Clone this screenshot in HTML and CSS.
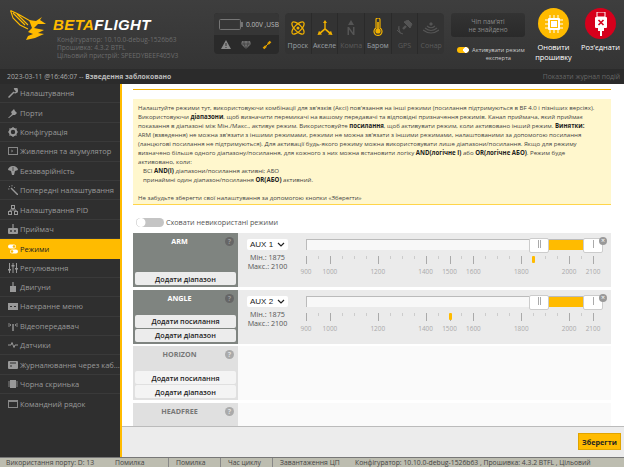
FILE: index.html
```html
<!DOCTYPE html>
<html lang="uk">
<head>
    <meta charset="UTF-8">
    <title>Betaflight</title>
    <link rel="stylesheet" href="styles.css">
</head>
<body>

    <header class="top">
        <div class="brand">
            <svg class="bird" viewBox="0 0 42 32" width="42" height="32">
                <path d="M0.5 0.5 L8 4 L22 12 M0.5 0.5 L3 8 L10 15 L18 19 M3 3 L15 15 M7 4 L18 15" fill="none" stroke="#ffbb00" stroke-width="1.1"/>
                <path d="M19 10 L26 11 L32 7 L30 10 L36 14 L28 14 L24 18 L34 20 L28 23 L34 24 L25 28 L16 30 L18 26 L23 24 L18 22 L22 18 Z" fill="#ffbb00"/>
            </svg>
            <div class="brand-text">
                <div class="logo-word"><span class="logo-beta">BETA</span>FLIGHT</div>
                <div class="versions">
                    Конфігуратор: 10.10.0-debug-1526b63<br>
                    Прошивка: 4.3.2 BTFL<br>
                    Цільовий пристрій: SPEEDYBEEF405V3
                </div>
            </div>
        </div>

        <div class="power">
            <div class="power-top">
                <svg viewBox="0 0 24 11" width="24" height="11">
                    <rect x="0.5" y="0.5" width="21" height="10" rx="1" fill="none" stroke="#777"/>
                    <rect x="22" y="3" width="2" height="5" fill="#777"/>
                </svg>
                <span class="voltage">0.00V ,USB</span>
            </div>
            <div class="power-icons">
                <svg viewBox="0 0 10 9" width="10" height="9"><path d="M5 0 L10 9 H0 Z" fill="#8a8a8a"/><rect x="4.5" y="3" width="1" height="3" fill="#333"/><rect x="4.5" y="7" width="1" height="1" fill="#333"/></svg>
                <svg viewBox="0 0 10 8" width="10" height="8"><path d="M1 0 H9 L10 3 L5 8 L0 3 Z" fill="#6f6f6f"/><path d="M0 3 H10 M3 0 L3 3 L5 8 L7 3 L7 0" stroke="#333" stroke-width="0.6" fill="none"/></svg>
                <svg viewBox="0 0 10 10" width="10" height="10"><path d="M1.5 8.5 L4 6 M6 4 L8.5 1.5" stroke="#e0a000" stroke-width="2.4" fill="none"/><path d="M3 7 L7 3" stroke="#e0a000" stroke-width="1"/></svg>
            </div>
        </div>

        <div class="sensors">
            <div class="sensor on">
                <svg viewBox="0 0 16 16" width="16" height="16"><g fill="none" stroke="#f0b000" stroke-width="1.3"><ellipse cx="8" cy="8" rx="8" ry="3.4" transform="rotate(45 8 8)"/><ellipse cx="8" cy="8" rx="8" ry="3.4" transform="rotate(-45 8 8)"/></g><circle cx="8" cy="8" r="1.5" fill="#f0b000"/></svg>
                <span>Проск</span>
            </div>
            <div class="sensor on">
                <svg viewBox="0 0 16 16" width="16" height="16"><path d="M8 0 L10 3 H8.7 V8.5 L13 12 L14 10.8 L15.5 15 L11 14.6 L12 13.4 L8 10 L4 13.4 L5 14.6 L0.5 15 L2 10.8 L3 12 L7.3 8.5 V3 H6 Z" fill="#f0b000"/></svg>
                <span>Акселе</span>
            </div>
            <div class="sensor">
                <svg viewBox="0 0 14 16" width="14" height="16"><path d="M7 0 L10 5 H4 Z" fill="#555"/><path d="M3.5 15 V7 H5 L9 12.5 V7 H10.5 V15 H9 L5 9.5 V15 Z" fill="#555"/></svg>
                <span>Компа</span>
            </div>
            <div class="sensor on">
                <svg viewBox="0 0 10 18" width="10" height="18"><path d="M3 1.5 a2 1.5 0 0 1 4 0 V10 a4 4 0 1 1 -4 0 Z" fill="none" stroke="#f0b000" stroke-width="1.2"/><rect x="4.2" y="4" width="1.6" height="8" fill="#f0b000"/><circle cx="5" cy="13" r="2.6" fill="#f0b000"/></svg>
                <span>Баром</span>
            </div>
            <div class="sensor">
                <svg viewBox="0 0 16 16" width="16" height="16"><path d="M7 2 L11 0 L15 4 L13 8 Z M3 12 A6 6 0 0 1 2 6 M6 14 A9 9 0 0 1 0 10" stroke="#555" fill="#555" stroke-width="1"/><path d="M9 6 L6 9" stroke="#555" stroke-width="2.4"/></svg>
                <span>GPS</span>
            </div>
            <div class="sensor">
                <svg viewBox="0 0 16 14" width="16" height="14"><g fill="none" stroke="#555" stroke-width="1.1"><path d="M0 8 Q8 14 16 8"/><path d="M2 6 Q8 11 14 6"/><path d="M4 4 Q8 7.5 12 4"/></g><path d="M6 2 L8 0 L10 2 L8 4 Z" fill="#555"/></svg>
                <span>Сонар</span>
            </div>
        </div>

        <div class="flash-box">
            <div class="flash-info">Чіп пам'яті<br>не знайдено</div>
            <div class="expert">
                <span class="mini-toggle"></span>
                <span class="expert-label">Активувати режим<br>експерта</span>
            </div>
        </div>

        <div class="round-btn">
            <div class="circle circle-flash">
                <svg viewBox="0 0 18 18" width="18" height="18">
                    <rect x="3" y="3" width="12" height="12" rx="1" fill="#fff"/>
                    <path d="M5 0 V18 M9 0 V18 M13 0 V18 M0 5 H18 M0 9 H18 M0 13 H18" stroke="#fff" stroke-width="1"/>
                    <rect x="5" y="5" width="8" height="8" fill="#ffbb00"/>
                    <rect x="6" y="6" width="6" height="6" fill="#fff"/>
                </svg>
            </div>
            <span>Оновити<br>прошивку</span>
        </div>
        <div class="round-btn">
            <div class="circle circle-connect">
                <svg viewBox="0 0 14 24" width="14" height="24">
                    <rect x="3" y="0" width="8" height="5" fill="none" stroke="#fff"/>
                    <rect x="1" y="5" width="12" height="11" rx="1" fill="#fff"/>
                    <path d="M4.5 8 L9.5 13 M9.5 8 L4.5 13" stroke="#d6001c" stroke-width="1.6"/>
                    <path d="M7 16 V24" stroke="#fff" stroke-width="2"/>
                    <rect x="4" y="16" width="6" height="3" fill="#fff"/>
                </svg>
            </div>
            <span>Роз'єднати</span>
        </div>
    </header>

    <div class="log-bar">
        <div class="log-text">2023-03-11 @16:46:07 -- <b>Взведення заблоковано</b></div>
        <div class="log-toggle">Показати журнал подій</div>
    </div>

    <div class="main">
        <nav class="sidebar">
            <a class="nav-item"><svg viewBox="0 0 10 10" width="10" height="10"><path d="M0.5 9.5 L6 4 M6 1 L9 0 L7.5 2 L8.5 3 L10 1.5 L9 4 L6.5 5" stroke="#999" stroke-width="1.5" fill="none"/></svg>Налаштування</a>
            <a class="nav-item"><svg viewBox="0 0 10 10" width="10" height="10"><path d="M0 10 L4 6 L3 4 L6 1 L7 3 L9 5 L7 7 L5 7 L1 10 Z" fill="#999"/></svg>Порти</a>
            <a class="nav-item"><svg viewBox="0 0 10 10" width="10" height="10"><circle cx="5" cy="5" r="3.2" fill="none" stroke="#999" stroke-width="2"/><path d="M5 0 V10 M0 5 H10 M1.5 1.5 L8.5 8.5 M8.5 1.5 L1.5 8.5" stroke="#999" stroke-width="1.2" stroke-dasharray="1.6 6.8"/></svg>Конфігурація</a>
            <a class="nav-item"><svg viewBox="0 0 10 8" width="10" height="8"><rect x="0.5" y="0.5" width="9" height="7" fill="none" stroke="#888"/><path d="M3 3 L5 4 L3 5" stroke="#888" fill="none" stroke-width="0.7"/></svg>Живлення та акумулятор</a>
            <a class="nav-item"><svg viewBox="0 0 10 10" width="10" height="10"><path d="M0 4 A5 4 0 0 1 10 4 L7 5 L6 9 H4 L3 5 Z" fill="#999"/><path d="M5 1 V5" stroke="#2f2f2f" stroke-width="0.7"/></svg>Безаварійність</a>
            <a class="nav-item"><svg viewBox="0 0 10 10" width="10" height="10"><path d="M3 3 L10 10" stroke="#999" stroke-width="1.4"/><path d="M1 1 L2 2 M4 0 V1.5 M0 4 H1.5 M7 2 L6 3" stroke="#999" stroke-width="0.8"/></svg>Попередні налаштування</a>
            <a class="nav-item"><svg viewBox="0 0 10 10" width="10" height="10"><g fill="none" stroke="#999"><rect x="3.5" y="0.5" width="3" height="3"/><rect x="0.5" y="6.5" width="3" height="3"/><rect x="6.5" y="6.5" width="3" height="3"/><path d="M5 3.5 V5 H2 V6.5 M5 5 H8 V6.5"/></g></svg>Налаштування PID</a>
            <a class="nav-item"><svg viewBox="0 0 10 10" width="10" height="10"><rect x="0" y="4" width="10" height="6" rx="1" fill="#999"/><rect x="4.4" y="0" width="1.2" height="5" fill="#999"/><circle cx="3" cy="7" r="0.9" fill="#2f2f2f"/><circle cx="7" cy="7" r="0.9" fill="#2f2f2f"/></svg>Приймач</a>
            <a class="nav-item active"><svg viewBox="0 0 10 10" width="10" height="10"><rect x="0" y="0.5" width="8" height="4" rx="2" fill="#fff"/><rect x="2" y="5.5" width="8" height="4" rx="2" fill="#fff"/><circle cx="6" cy="2.5" r="1.3" fill="#ffbb00"/><circle cx="4" cy="7.5" r="1.3" fill="#ffbb00"/></svg>Режими</a>
            <a class="nav-item"><svg viewBox="0 0 10 10" width="10" height="10"><path d="M1.5 0 V10 M5 0 V10 M8.5 0 V10" stroke="#999"/><rect x="0" y="6" width="3" height="1.5" fill="#999"/><rect x="3.5" y="2" width="3" height="1.5" fill="#999"/><rect x="7" y="5" width="3" height="1.5" fill="#999"/></svg>Регулювання</a>
            <a class="nav-item"><svg viewBox="0 0 10 10" width="10" height="10"><rect x="4.4" y="0" width="1.2" height="4" fill="#999"/><rect x="2" y="4" width="6" height="6" fill="#999"/></svg>Двигуни</a>
            <a class="nav-item"><svg viewBox="0 0 10 7" width="10" height="7"><rect width="10" height="7" fill="#999"/><path d="M2 3.5 H4 M6 3.5 H8" stroke="#2f2f2f"/></svg>Наекранне меню</a>
            <a class="nav-item"><svg viewBox="0 0 10 10" width="10" height="10"><rect x="4.3" y="3" width="1.4" height="7" fill="#999"/><path d="M1 2 V6 M9 2 V6 M2.5 3 V5 M7.5 3 V5" stroke="#999" stroke-width="0.8"/></svg>Відеопередавач</a>
            <a class="nav-item"><svg viewBox="0 0 10 10" width="10" height="10"><path d="M0 5 H3 L4 2.5 L6 7.5 L7 5 H10" stroke="#999" fill="none"/></svg>Датчики</a>
            <a class="nav-item"><svg viewBox="0 0 10 8" width="10" height="8"><rect width="10" height="8" rx="1" fill="#999"/><path d="M2 2 H8 M2 5 H4" stroke="#2f2f2f"/></svg>Журналювання через каб...</a>
            <a class="nav-item"><svg viewBox="0 0 10 10" width="10" height="10"><rect x="2" y="1" width="6" height="8" fill="#999"/><path d="M0 3 H10 M0 5 H10 M0 7 H10" stroke="#999" stroke-width="0.8"/></svg>Чорна скринька</a>
            <a class="nav-item"><svg viewBox="0 0 10 8" width="10" height="8"><rect x="0.5" y="0.5" width="9" height="7" fill="none" stroke="#888"/><rect x="0.5" y="0.5" width="9" height="1.5" fill="#888"/></svg>Командний рядок</a>
        </nav>

        <section class="content">
            <div class="scroll">
                <div class="note-rule"></div>
                <div class="note">
                    <p>
                        Налаштуйте режими тут, використовуючи комбінації для зв'язків (Аксі) пов'язання на інші режими (посилання підтримуються в BF 4.0 і пізніших версіях).<br>
                        Використовуючи <b>діапазони</b>, щоб визначити перемикачі на вашому передавачі та відповідні призначення режимів. Канал приймача, який приймає<br>
                        показання в діапазоні між Мін./Макс., активує режим. Використовуйте <b>посилання</b>, щоб активувати режим, коли активовано інший режим. <b>Винятки:</b><br>
                        ARM (взведення) не можна зв'язати з іншими режимами, режими не можна зв'язати з іншими режимами, налаштованими за допомогою посилання<br>
                        (ланцюгові посилання не підтримуються). Для активації будь-якого режиму можна використовувати лише діапазони/посилання. Якщо для режиму<br>
                        визначено більше одного діапазону/посилання, для кожного з них можна встановити логіку <b>AND(логічне І)</b> або <b>OR(логічне АБО)</b>. Режим буде<br>
                        активовано, коли:<br>
                        <span class="indent">ВСІ <b>AND(І)</b> діапазони/посилання активні; АБО</span><br>
                        <span class="indent">принаймні один діапазон/посилання <b>OR(АБО)</b> активний.</span><br>
                        <br>
                        Не забудьте зберегти свої налаштування за допомогою кнопки «Зберегти»
                    </p>
                </div>

                <div class="collapse-row">
                    <span class="switch"></span>
                    <span>Сховати невикористані режими</span>
                </div>

                <div class="mode active-mode">
                    <div class="mode-side">
                        <div class="mode-title">ARM<span class="help">?</span></div>
                        <div class="mode-btns"><button class="btn-add">Додати діапазон</button></div>
                    </div>
                    <div class="mode-body">
                        <div class="channel">
                            <div class="aux-select">AUX 1<svg viewBox="0 0 8 5" width="8" height="5"><path d="M1 1 L4 4 L7 1" fill="none" stroke="#222" stroke-width="1.2"/></svg></div>
                            <div class="limits">Мін.: 1875<br>Макс.: 2100</div>
                        </div>
                        <div class="slider" data-marker="1850"></div>
                    </div>
                </div>

                <div class="mode active-mode">
                    <div class="mode-side">
                        <div class="mode-title">ANGLE<span class="help">?</span></div>
                        <div class="mode-btns">
                            <button class="btn-add">Додати посилання</button>
                            <button class="btn-add">Додати діапазон</button>
                        </div>
                    </div>
                    <div class="mode-body">
                        <div class="channel">
                            <div class="aux-select">AUX 2<svg viewBox="0 0 8 5" width="8" height="5"><path d="M1 1 L4 4 L7 1" fill="none" stroke="#222" stroke-width="1.2"/></svg></div>
                            <div class="limits">Мін.: 1875<br>Макс.: 2100</div>
                        </div>
                        <div class="slider" data-marker="1500"></div>
                    </div>
                </div>

                <div class="mode">
                    <div class="mode-side">
                        <div class="mode-title">HORIZON<span class="help">?</span></div>
                        <div class="mode-btns">
                            <button class="btn-add">Додати посилання</button>
                            <button class="btn-add">Додати діапазон</button>
                        </div>
                    </div>
                    <div class="mode-body"></div>
                </div>

                <div class="mode">
                    <div class="mode-side">
                        <div class="mode-title">HEADFREE<span class="help">?</span></div>
                    </div>
                    <div class="mode-body"></div>
                </div>
            </div>

            <div class="save-bar">
                <button class="btn-save">Зберегти</button>
            </div>
        </section>
    </div>

    <footer class="status">
        <span class="stat stat-port">Використання порту: D: 13</span>
        <span class="stat stat-first">Помилка</span>
        <span class="stat">Помилка</span>
        <span class="stat">Час циклу</span>
        <span class="stat-cpu">Завантаження ЦП</span>
        <span class="stat-version">Конфігуратор: 10.10.0-debug-1526b63 , Прошивка: 4.3.2 BTFL , Цільовий</span>
    </footer>

    <script>
        // scale under each range slider, 900..2100 in steps of 50
        const labelled = [900, 1000, 1200, 1400, 1500, 1600, 1800, 2000, 2100];
        const toPercent = v => ((v - 900) / 1200 * 100) + '%';

        document.querySelectorAll('.slider').forEach(slider => {
            let html = '<div class="track"></div>';
            html += `<div class="range" style="left:${toPercent(1875)};width:${100 - (975 / 12)}%"></div>`;
            html += `<div class="handle" style="left:${toPercent(1875)}"><i></i><i></i></div>`;
            html += `<div class="handle" style="left:${toPercent(2100)}"><i></i></div>`;
            html += '<span class="remove">×</span>';
            for (let v = 900; v <= 2100; v += 50) {
                const major = labelled.includes(v);
                html += `<div class="pip${major ? ' major' : ''}" style="left:${toPercent(v)}"></div>`;
                if (major) html += `<div class="pip-label" style="left:${toPercent(v)}">${v}</div>`;
            }
            html += `<div class="marker" style="left:${toPercent(parseInt(slider.dataset.marker))}"></div>`;
            slider.innerHTML = html;
        });
    </script>
</body>
</html>
```

FILE: styles.css
```css
* {
    box-sizing: border-box;
}
html, body {
    height: 100%;
}
body {
    margin: 0;
    display: flex;
    flex-direction: column;
    overflow: hidden;
    font-family: 'Open Sans', sans-serif;
    font-size: 8px;
    color: #222;
    background: #fff;
}

/* Top bar */
.top {
    flex: none;
    height: 69px;
    display: flex;
    background: linear-gradient(#3e3e3e, #343434);
    padding: 13px 0 0 10px;
}
.brand {
    width: 204px;
    display: flex;
    margin-top: -3px;
}
.bird {
    flex: none;
    margin-right: 1px;
}
.brand-text {
    padding-left: 0;
    margin-top: 8px;
}
.logo-word {
    font-family: 'Liberation Sans', sans-serif;
    font-weight: bold;
    font-style: italic;
    font-size: 15px;
    line-height: 13px;
    letter-spacing: 0.4px;
    color: #fff;
    white-space: nowrap;
}
.logo-beta {
    color: #ffbb00;
}
.versions {
    margin: 5px 0 0 4px;
    font-size: 6.6px;
    line-height: 8px;
    color: #6c6c6c;
    white-space: nowrap;
}
.power {
    flex: none;
    width: 65px;
    height: 41px;
    border-radius: 4px;
    overflow: hidden;
    background: #2a2a2a;
}
.power-top {
    height: 22px;
    background: #363636;
    display: flex;
    align-items: center;
    padding-left: 5px;
    gap: 3px;
}
.voltage {
    font-size: 6.6px;
    color: #bbb;
    white-space: nowrap;
}
.power-icons {
    height: 19px;
    display: flex;
    align-items: center;
    justify-content: space-around;
    padding: 0 2px;
}
.sensors {
    flex: none;
    margin-left: 6px;
    width: 159px;
    height: 41px;
    border-radius: 4px;
    overflow: hidden;
    background: #333;
    display: flex;
}
.sensor {
    flex: 1;
    min-width: 0;
    overflow: hidden;
    border-right: 1px solid #2a2a2a;
    display: flex;
    flex-direction: column;
    align-items: center;
    justify-content: flex-end;
    font-size: 7px;
    line-height: 9px;
    padding-bottom: 4px;
    color: #5c5c5c;
    gap: 5px;
}
.sensor span {
    white-space: nowrap;
}
.sensor.on {
    color: #9aa0a6;
}
.sensor:last-child {
    border-right: none;
}
.flash-box {
    flex: none;
    width: 74px;
    margin: 0 5px 0 7px;
}
.flash-info {
    height: 24px;
    border-radius: 3px;
    background: linear-gradient(#333, #2a2a2a);
    color: #8a8a8a;
    font-size: 6.4px;
    line-height: 8px;
    text-align: center;
    padding-top: 5px;
}
.expert {
    margin-top: 9px;
    display: flex;
    align-items: flex-start;
    gap: 3px;
    padding-left: 6px;
}
.mini-toggle {
    flex: none;
    width: 12px;
    height: 6px;
    border-radius: 3px;
    background: #ffbb00 radial-gradient(circle at 9px 3px, #fff 2.6px, transparent 3px);
    margin-top: 1px;
}
.expert-label {
    font-size: 5.8px;
    line-height: 8px;
    color: #ccc;
    text-align: center;
    white-space: nowrap;
}
.round-btn {
    flex: none;
    width: 47px;
    display: flex;
    flex-direction: column;
    align-items: center;
    margin-top: -5px;
    font-size: 7.4px;
    line-height: 10px;
    color: #fff;
    text-align: center;
    white-space: nowrap;
}
.circle {
    flex: none;
    width: 31px;
    height: 31px;
    border-radius: 50%;
    display: flex;
    align-items: center;
    justify-content: center;
    margin-bottom: 3px;
}
.circle-flash {
    background: #ffbb00;
}
.circle-connect {
    background: #d6001c;
}

/* Log line */
.log-bar {
    flex: none;
    height: 15px;
    background: #2b2b2b;
    display: flex;
    align-items: center;
    justify-content: space-between;
    padding: 0 4px 0 7px;
    font-size: 6.8px;
}
.log-text {
    color: #aaa;
}
.log-text b {
    color: #bbb;
}
.log-toggle {
    color: #666;
}

/* Main area */
.main {
    flex: 1;
    min-height: 0;
    display: flex;
}
.sidebar {
    flex: none;
    width: 122px;
    background: #2f2f2f;
    border-right: 2px solid #ffbb00;
}
.nav-item {
    height: 19.4px;
    display: flex;
    align-items: center;
    padding-left: 8px;
    gap: 2px;
    font-size: 7.5px;
    color: #999;
    border-bottom: 1px solid #3a3a3a;
    white-space: nowrap;
}
.nav-item:last-child {
    border-bottom: none;
}
.nav-item svg {
    flex: none;
    width: 10px;
}
.nav-item.active {
    background: #ffbb00;
    color: #222;
    border-bottom: none;
}

.content {
    flex: 1;
    min-width: 0;
    display: flex;
    flex-direction: column;
}
.scroll {
    flex: 1;
    min-height: 0;
    overflow: hidden;
    padding: 5px 13px 0 11px;
}
.note-rule {
    height: 1px;
    background: #f0b000;
}
.note {
    margin-top: 9px;
    height: 106px;
    background: #fff7cd;
    border-bottom: 1px solid #ffd54a;
    padding: 4px 5px;
}
.note p {
    margin: 0;
    font-size: 6.1px;
    line-height: 9px;
    color: #444;
    white-space: nowrap;
}
.note b {
    color: #222;
}
.indent {
    padding-left: 5px;
}
.collapse-row {
    display: flex;
    align-items: center;
    gap: 2px;
    height: 28px;
    padding: 6px 0 0 3px;
    font-size: 7.2px;
    color: #555;
}
.switch {
    width: 28px;
    height: 9px;
    border-radius: 5px;
    background: #c4c4c4 radial-gradient(circle at 5px 4.5px, #fff 4px, #ddd 4.5px, transparent 5px);
}

/* Mode rows */
.mode {
    display: flex;
    height: 54px;
    margin-bottom: 2.5px;
}
.mode-side {
    flex: none;
    width: 105px;
    background: #e0e0e0;
    color: #777;
    padding: 3px 2px 2px;
    display: flex;
    flex-direction: column;
    justify-content: space-between;
}
.active-mode .mode-side {
    background: #7f8480;
    color: #fff;
}
.mode-title {
    position: relative;
    text-align: center;
    font-size: 7.2px;
    font-weight: bold;
    line-height: 11px;
    padding-right: 12px;
}
.help {
    position: absolute;
    right: 2px;
    top: 1px;
    width: 9px;
    height: 9px;
    border-radius: 50%;
    background: #aaa;
    color: #e0e0e0;
    font-size: 7px;
    line-height: 9px;
}
.active-mode .help {
    background: #666;
    color: #999;
}
.mode-btns {
    display: flex;
    flex-direction: column;
    gap: 1px;
}
.btn-add {
    height: 13px;
    padding: 0;
    border: none;
    border-radius: 2px;
    background: #f4f4f4;
    font-family: inherit;
    font-size: 7.2px;
    font-weight: 600;
    color: #222;
}
.active-mode .btn-add {
    background: #ececec;
}
.mode-body {
    flex: 1;
    display: flex;
    background: #fafafa;
}
.active-mode .mode-body {
    background: #ebebeb;
}
.channel {
    flex: none;
    width: 68px;
    padding: 6px 0 0 9px;
}
.aux-select {
    width: 41px;
    height: 11px;
    background: #fff;
    border-radius: 2px;
    font-family: 'Liberation Sans', sans-serif;
    font-size: 8px;
    line-height: 11px;
    padding: 0 3px;
    display: flex;
    align-items: center;
    justify-content: space-between;
}
.limits {
    width: 41px;
    margin-top: 3px;
    font-size: 7.2px;
    line-height: 9px;
    text-align: center;
    color: #555;
    white-space: nowrap;
}
.slider {
    position: relative;
    width: 287px;
    height: 100%;
}
.track {
    position: absolute;
    left: 0;
    right: -10px;
    top: 6px;
    height: 11px;
    background: #f8f8f8;
    border-top: 1px solid #bbb;
    border-left: 1px solid #bbb;
}
.range {
    position: absolute;
    top: 7px;
    height: 10px;
    background: #ffbb00;
}
.handle {
    position: absolute;
    top: 5px;
    width: 20px;
    height: 15px;
    margin-left: -10px;
    background: #fff;
    border: 1px solid #ccc;
    border-radius: 2px;
    display: flex;
    align-items: center;
    justify-content: center;
    gap: 1px;
    padding-bottom: 3px;
}
.handle i {
    width: 1px;
    height: 8px;
    background: #aaa;
}
.remove {
    position: absolute;
    right: -14px;
    top: 4px;
    width: 8px;
    height: 8px;
    border-radius: 50%;
    background: #999;
    color: #fff;
    font-size: 7px;
    line-height: 8px;
    text-align: center;
}
.pip {
    position: absolute;
    top: 23px;
    width: 1px;
    height: 3px;
    background: #ccc;
}
.pip.major {
    height: 8px;
    background: #aaa;
}
.pip-label {
    position: absolute;
    top: 35px;
    transform: translateX(-50%);
    font-size: 6.4px;
    line-height: 8px;
    color: #aaa;
}
.marker {
    position: absolute;
    top: 23px;
    width: 3px;
    height: 7px;
    margin-left: -1px;
    border-radius: 1px;
    background: #ffbb00;
}

/* Bottom bars */
.save-bar {
    flex: none;
    height: 31px;
    background: #ececec;
    border-top: 1px solid #bbb;
    display: flex;
    justify-content: flex-end;
    align-items: flex-start;
    padding: 6px 3px 0 0;
}
.btn-save {
    width: 43px;
    height: 17px;
    padding: 0;
    border: 1px solid #e0a400;
    background: #ffbb00;
    font-family: inherit;
    font-size: 7.2px;
    font-weight: bold;
    color: #222;
}
.status {
    flex: none;
    height: 10px;
    background: #bdbdb0;
    border-top: 1px solid #777;
    display: flex;
    align-items: center;
    font-size: 6.8px;
    line-height: 9px;
    color: #444;
    white-space: nowrap;
    overflow: hidden;
}
.stat {
    width: 52px;
    padding-left: 7px;
    border-right: 1px solid #888;
}
.stat-port {
    width: 113px;
    padding-left: 6px;
    border-right: none;
}
.stat-first {
    width: 56px;
    padding-left: 2px;
}
.stat-cpu {
    width: 82px;
    padding-left: 7px;
}
```
